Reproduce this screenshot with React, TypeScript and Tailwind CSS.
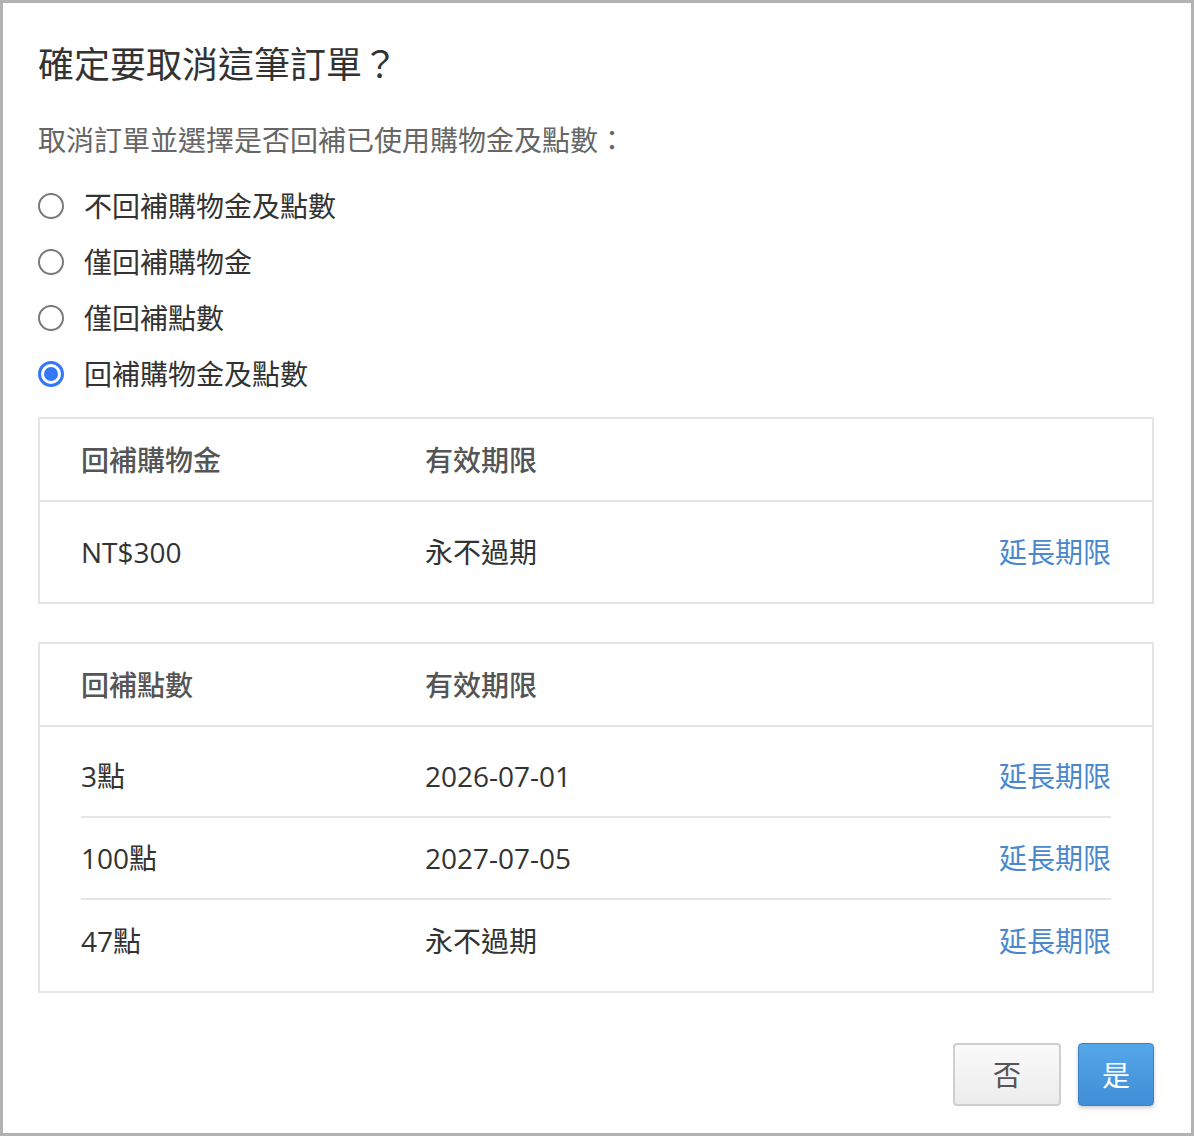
import { useState } from "react";

const options = ["不回補購物金及點數", "僅回補購物金", "僅回補點數", "回補購物金及點數"];

const pointRows = [
  { amount: "3點", expiry: "2026-07-01" },
  { amount: "100點", expiry: "2027-07-05" },
  { amount: "47點", expiry: "永不過期" },
];

function Radio({ checked }: { checked: boolean }) {
  if (checked) {
    return (
      <span className="flex h-[26px] w-[26px] items-center justify-center rounded-full border-[3px] border-[#3478f6] bg-white">
        <span className="h-[14px] w-[14px] rounded-full bg-[#3478f6]" />
      </span>
    );
  }
  return <span className="block h-[26px] w-[26px] rounded-full border-2 border-[#7a7a7a] bg-white" />;
}

function Row({ a, b, last }: { a: string; b: string; last?: boolean }) {
  return (
    <div className={"flex h-[82px] items-center " + (last ? "" : "border-b-2 border-[#e4e4e4]")}>
      <div className="w-[344px] text-[#333]">{a}</div>
      <div className="flex-1 text-[#333]">{b}</div>
      <a className="cursor-pointer text-[#4a87cc]">延長期限</a>
    </div>
  );
}

export default function App() {
  const [picked, setPicked] = useState(3);

  return (
    <div
      className="h-[1136px] w-full bg-[#b3b3b3] p-[3px]"
      style={{ fontFamily: '"Open Sans", "Noto Sans CJK TC", sans-serif' }}
    >
      <div className="flex h-full flex-col bg-white pl-[35px] pr-[37px] pt-[40px] pb-[27px] text-[28px]">
        <h1 className="text-[36px] leading-[44px] text-[#333]">確定要取消這筆訂單？</h1>
        <p className="mt-[33px] leading-[40px] text-[#666]">取消訂單並選擇是否回補已使用購物金及點數：</p>

        <div className="mt-[18px] flex flex-col">
          {options.map((opt, i) => (
            <label
              key={opt}
              className="flex h-[56px] cursor-pointer items-center gap-[20px] text-[#333]"
              onClick={() => setPicked(i)}
            >
              <Radio checked={picked === i} />
              <span>{opt}</span>
            </label>
          ))}
        </div>

        <div className="mt-[15px] border-2 border-[#e4e4e4]">
          <div className="flex h-[83px] items-center border-b-2 border-[#e4e4e4] px-[41px] font-medium text-[#555]">
            <div className="w-[344px]">回補購物金</div>
            <div>有效期限</div>
          </div>
          <div className="px-[41px] py-[9px]">
            <Row a="NT$300" b="永不過期" last />
          </div>
        </div>

        <div className="mt-[38px] border-2 border-[#e4e4e4]">
          <div className="flex h-[83px] items-center border-b-2 border-[#e4e4e4] px-[41px] font-medium text-[#555]">
            <div className="w-[344px]">回補點數</div>
            <div>有效期限</div>
          </div>
          <div className="px-[41px] py-[9px]">
            {pointRows.map((r, i) => (
              <Row key={r.amount} a={r.amount} b={r.expiry} last={i === pointRows.length - 1} />
            ))}
          </div>
        </div>

        <div className="mt-auto flex justify-end gap-[17px]">
          <button className="h-[63px] w-[108px] rounded-[4px] border-2 border-[#cfcfcf] bg-gradient-to-b from-[#fafafa] to-[#ececec] text-[#555]">
            否
          </button>
          <button className="h-[63px] w-[76px] rounded-[4px] border border-[#3b82c4] bg-gradient-to-b from-[#56a6ea] to-[#3f8ed6] text-white shadow-[0_2px_4px_rgba(0,0,0,0.2)]">
            是
          </button>
        </div>
      </div>
    </div>
  );
}
